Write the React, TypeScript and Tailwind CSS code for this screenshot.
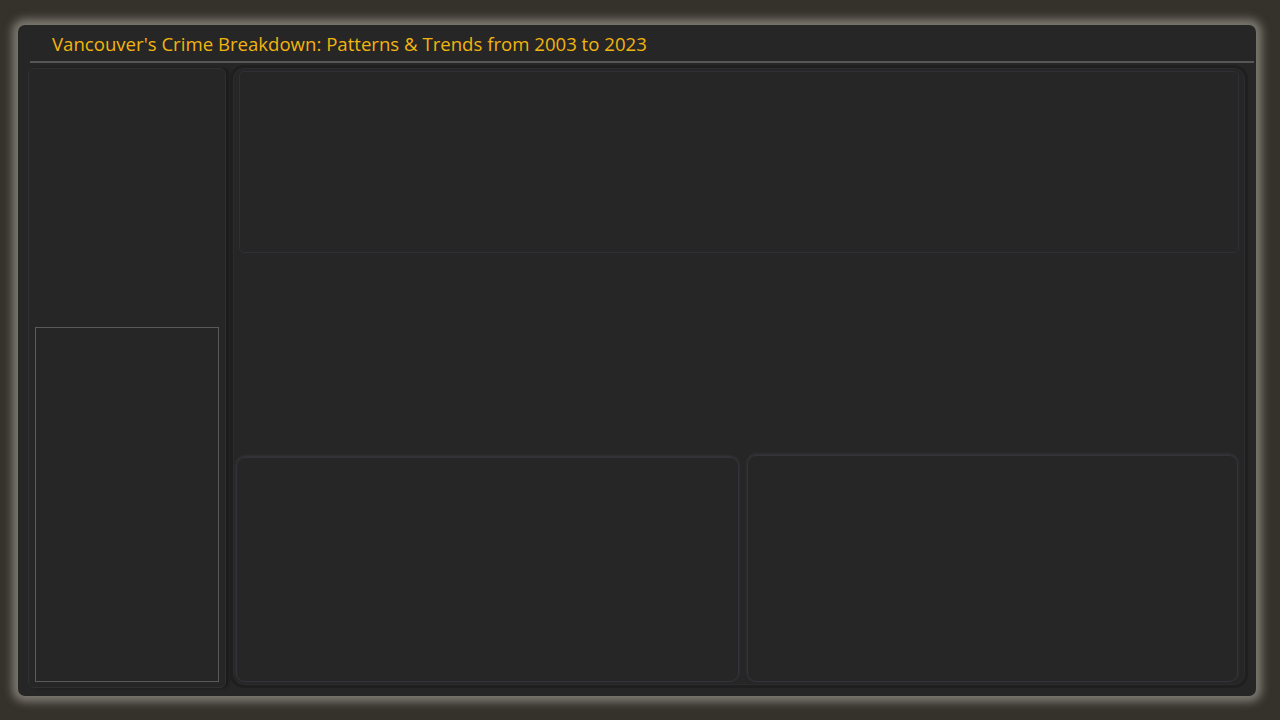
import React from 'react';

const font = { fontFamily: '"Open Sans", "Liberation Sans", sans-serif' };

export default function App() {
  return (
    <div className="w-[1280px] h-[720px] bg-[#35322c] pl-[18px] pr-[24px] pt-[25px] pb-[24px] flex" style={font}>
      <div className="flex-1 flex flex-col rounded-[7px] bg-[#262626] shadow-[0_0_8px_6px_#7b786f] px-[10px] pb-[8px]">
        {/* Header */}
        <div className="h-[38px] flex items-center pl-[22px] pt-[2px] border-b-2 border-[#565656] ml-[2px] mr-[-8px] shrink-0">
          <h1 className="text-[18.6px] leading-none text-[#f2b40e]">
            Vancouver's Crime Breakdown: Patterns &amp; Trends from 2003 to 2023
          </h1>
        </div>

        <div className="flex-1 flex gap-[4px] pt-[2px]">
          {/* Sidebar */}
          <div className="w-[198px] mt-[3px] rounded-[6px] border border-[#303034] bg-[#262626] shadow-[3px_0_3px_#1b1b1b] flex flex-col justify-end px-[6px] pb-[5px]">
            <div className="h-[355px] border border-[#5a5a5a]" />
          </div>

          {/* Main */}
          <div className="flex-1 rounded-[14px] bg-[#262626] border-[3px] border-[#1f1f1f] shadow-[inset_0_0_0_1px_#2c2c30] flex flex-col px-[3px] pt-[3px] pb-[3px] mr-[-2px]">
            <div className="mx-[3px] h-[182px] rounded-[5px] border border-[#2f2f35]" />
            <div className="flex-1" />
            <div className="h-[227px] flex gap-[8px] mr-[4px]">
              <div className="w-[503px] mt-[2px] rounded-[9px] border border-[#33333a] shadow-[0_-1px_3px_#3a3a3a]" />
              <div className="flex-1 rounded-[9px] border border-[#33333a] shadow-[0_-1px_3px_#3a3a3a]" />
            </div>
          </div>
        </div>
      </div>
    </div>
  );
}
